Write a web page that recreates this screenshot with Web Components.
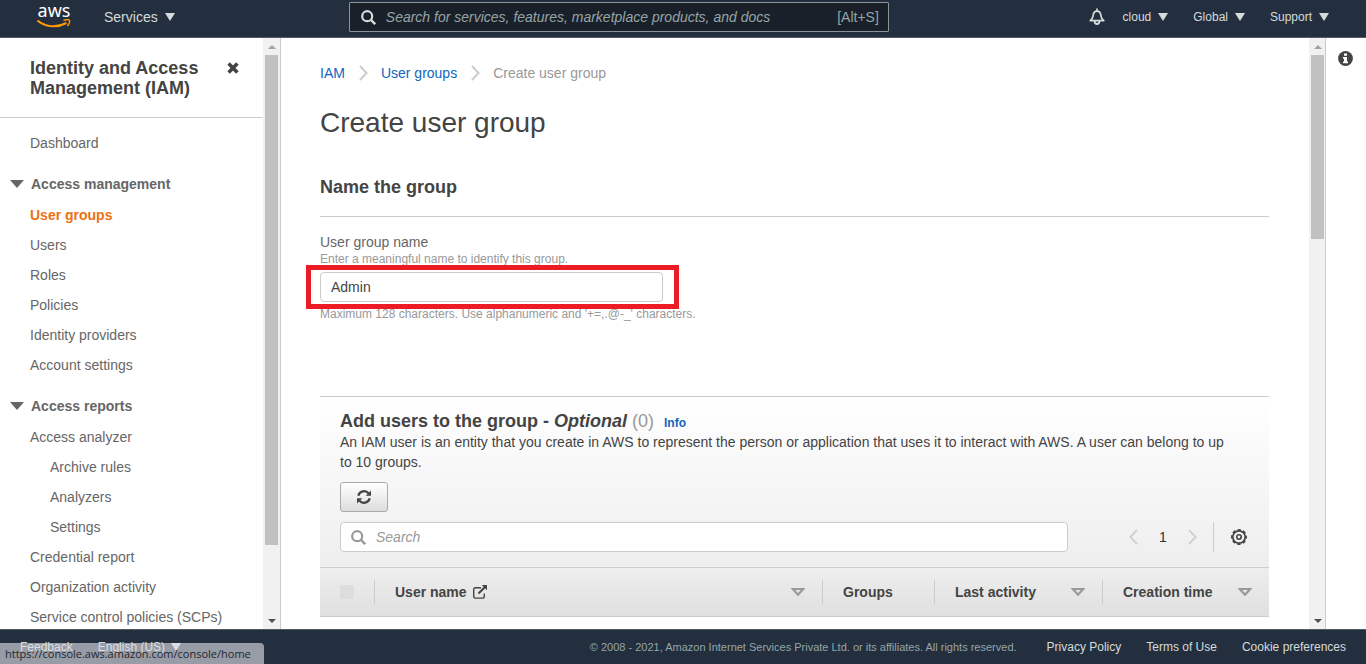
<!DOCTYPE html>
<html lang="en">
<head>
<meta charset="utf-8">
<title>Create user group - IAM</title>
<style>
  html, body { height: 100%; margin: 0; }
  body { font: 14px/20px "Liberation Sans", Arial, sans-serif; color: #444; background: #fff; overflow: hidden; }
</style>
</head>
<body>
<iam-console></iam-console>
<script>
const base = `<style>
  *, *::before, *::after { box-sizing: border-box; }
  :host { display: block; }
  :host([hidden]) { display: none; }
  h1, h2, p, ul, ol { margin: 0; padding: 0; list-style: none; }
  button, input { font: inherit; color: inherit; margin: 0; }
  button { background: none; border: 0; padding: 0; cursor: pointer; }
  a { text-decoration: none; color: inherit; }
  svg { display: block; }
</style>`;

function define(name, html) {
  const template = document.createElement('template');
  template.innerHTML = base + html;
  customElements.define(name, class extends HTMLElement {
    constructor() {
      super();
      this.attachShadow({ mode: 'open' }).append(template.content.cloneNode(true));
    }
  });
}

/* Icons, chosen with the name attribute */
const icons = {
  caret: [10, 8, '<path d="M0 0h10L5 8z" fill="currentColor"/>'],
  fold: [14, 8, '<path d="M0 0h14L7 8z" fill="currentColor"/>'],
  sort: [14, 8, '<path d="M1.800 1h10.400L7 6.700z" fill="none" stroke="#999" stroke-width="2.200"/>'],
  search: [15, 15, '<circle cx="6.200" cy="6.200" r="5" fill="none" stroke="currentColor" stroke-width="2.200"/><path d="M9.900 9.900l4.300 4.300" stroke="currentColor" stroke-width="2.400"/>'],
  bell: [16, 18, '<path d="M8 1.2v1.6M1.200 12.600h13.600c-2.200-1.500-2.700-2.800-2.900-4.900C11.600 4.800 10.400 3.200 8 3.200S4.400 4.800 4.100 7.700c-.2 2.100-.7 3.400-2.900 4.900z" fill="none" stroke="currentColor" stroke-width="1.700" stroke-linejoin="round" stroke-linecap="round"/><path d="M5.600 13a2.400 3 0 0 0 4.800 0" fill="none" stroke="currentColor" stroke-width="1.800"/>'],
  close: [12, 12, '<path d="M1.600 1.600l8.800 8.800M10.400 1.600l-8.800 8.800" stroke="currentColor" stroke-width="3.600"/>'],
  chevron: [9, 16, '<path d="M1 1l6.500 7L1 15" fill="none" stroke="currentColor" stroke-width="2"/>'],
  back: [9, 16, '<path d="M8 1L1.500 8 8 15" fill="none" stroke="currentColor" stroke-width="1.800"/>'],
  next: [9, 16, '<path d="M1 1l6.500 7L1 15" fill="none" stroke="currentColor" stroke-width="1.800"/>'],
  refresh: [14, 14, '<path d="M1.300 5.800A5.900 5.900 0 0 1 11.600 3.400M12.700 8.200A5.900 5.900 0 0 1 2.400 10.600" fill="none" stroke="currentColor" stroke-width="2.200"/><path d="M14 .5v5.300H8.700zM0 13.500V8.200h5.300z" fill="currentColor"/>'],
  external: [14, 14, '<path d="M8 2.700H2.200A1.500 1.500 0 0 0 .7 4.200v7.400a1.500 1.500 0 0 0 1.500 1.500h7.600a1.500 1.500 0 0 0 1.500-1.500V8.500" fill="none" stroke="currentColor" stroke-width="1.400"/><path d="M5.500 8.500L12 2" stroke="currentColor" stroke-width="2.100"/><path d="M8.800 0H14v5.200z" fill="currentColor"/>'],
  gear: [16, 16, '<g fill="none" stroke="currentColor"><circle cx="8" cy="8" r="6.200" stroke-width="1.700"/><circle cx="8" cy="8" r="7.300" stroke-width="1.400" stroke-dasharray="3.400 2.333" stroke-dashoffset="1.700"/><circle cx="8" cy="8" r="2.200" stroke-width="1.600"/></g>'],
  info: [15, 15, '<circle cx="7.500" cy="7.500" r="7.400" fill="currentColor"/><path d="M6 2.500h3v2.200H6zM5 6h4v4.500h1v1.800H5v-1.800h1V7.700H5z" fill="#fff"/>'],
  up: [8, 4, '<path d="M0 4L4 0l4 4z" fill="currentColor"/>'],
  down: [8, 4, '<path d="M0 0l4 4 4-4z" fill="currentColor"/>']
};
customElements.define('ui-icon', class extends HTMLElement {
  connectedCallback() {
    if (this.shadowRoot) return;
    const [w, h, body] = icons[this.getAttribute('name')];
    this.attachShadow({ mode: 'open' }).innerHTML = base +
      `<style>:host { display: inline-block; flex: none; }</style>
       <svg width="${w}" height="${h}" viewBox="0 0 ${w} ${h}" aria-hidden="true">${body}</svg>`;
  }
});

define('aws-logo', `<style>
    :host { width: 34px; color: #fff; }
    b { display: block; font: 400 18px/8px "Noto Sans", sans-serif; text-align: center; height: 12px; }
    svg { margin-top: 1px; }
  </style>
  <b>aws</b>
  <svg width="34" height="9" viewBox="0 0 34 9" fill="none" stroke="#f90" aria-hidden="true">
    <path d="M.5 1.500C9 8.500 20 9 29.500 4" stroke-width="2"/>
    <path d="M26.500 1.500c3-1 5.500-1 6 0s-.5 3.500-2 5.500" stroke-width="1.500"/>
  </svg>`);

define('menu-button', `<style>
    button { display: flex; align-items: center; gap: var(--gap, 6px); white-space: nowrap; }
  </style>
  <button type="button"><slot></slot><ui-icon name="caret"></ui-icon></button>`);

define('top-bar', `<style>
    :host { flex: none; background: #232f3e; border-bottom: 1px solid #545b64; color: #d5dbdb; }
    header { display: grid; grid-template-columns: 17fr 540px 24fr; height: 37px; padding: 2px 37px 5px 37px; }
    .left, .right { display: flex; align-items: center; }
    .left { gap: 33px; }
    .right { justify-content: flex-end; font-size: 12px; gap: 25px; }
    .bell { display: flex; margin-right: -7px; }
    menu-button { --gap: 7px; }
    .search { display: flex; align-items: center; gap: 10px; padding: 0 9px 0 11px; background: #1a2029; border: 1px solid #879596; border-radius: 1px; color: #95a5a6; }
    .search ui-icon { color: #d5dbdb; }
    input { flex: 1; min-width: 0; border: 0; padding: 0; background: none; outline: 0; }
    input::placeholder { color: inherit; font-style: italic; opacity: 1; }
  </style>
  <header>
    <div class="left"><a href="#home" aria-label="AWS home"><aws-logo></aws-logo></a><menu-button>Services</menu-button></div>
    <div class="search"><ui-icon name="search"></ui-icon>
      <input type="text" aria-label="Search services" placeholder="Search for services, features, marketplace products, and docs"><span>[Alt+S]</span></div>
    <div class="right"><button class="bell" type="button" aria-label="Notifications"><ui-icon name="bell"></ui-icon></button>
      <menu-button>cloud</menu-button><menu-button>Global</menu-button><menu-button>Support</menu-button></div>
  </header>`);

define('scroll-rail', `<style>
    :host { display: flex; flex-direction: column; flex: none; background: #f1f1f1; border-right: 1px solid #ccc; padding-left: 2px; padding-right: var(--inset, 2px); }
    span { width: 13px; height: 17px; flex: none; display: grid; place-items: center; color: #505050; }
    .top { color: #a3a3a3; }
    .track { flex: 1; }
    .thumb { height: var(--thumb); background: #c1c1c1; }
  </style>
  <span class="top"><ui-icon name="up"></ui-icon></span>
  <div class="track"><div class="thumb"></div></div>
  <span><ui-icon name="down"></ui-icon></span>`);

define('nav-link', `<style>
    a { display: block; padding: 5px 0 5px 30px; color: #666; white-space: nowrap; }
    :host([nested]) a { padding-left: 50px; }
    :host([current]) a { color: #ec7211; font-weight: bold; }
  </style><a href="#"><slot></slot></a>`);

define('nav-section', `<style>
    :host { margin-top: 10px; }
    button { display: flex; align-items: center; gap: 7px; height: 32px; padding-left: 10px; font-weight: bold; color: #666; }
  </style>
  <button type="button" aria-expanded="true"><ui-icon name="fold"></ui-icon><slot name="title"></slot></button>
  <slot></slot>`);

define('side-nav', `<style>
    :host { flex: none; width: 263px; overflow: hidden; }
    .head { display: flex; align-items: flex-start; justify-content: space-between; padding: 20px 24px 19px 30px; border-bottom: 1px solid #ccc; }
    h2 { font-size: 18px; line-height: 20px; width: 180px; }
    .head button { display: flex; padding: 4px 0; }
    nav { padding-top: 10px; }
  </style>
  <div class="head"><h2>Identity and Access Management (IAM)</h2><button type="button" aria-label="Close navigation"><ui-icon name="close"></ui-icon></button></div>
  <nav>
    <nav-link>Dashboard</nav-link>
    <nav-section><span slot="title">Access management</span>
      <nav-link current>User groups</nav-link><nav-link>Users</nav-link><nav-link>Roles</nav-link><nav-link>Policies</nav-link>
      <nav-link>Identity providers</nav-link><nav-link>Account settings</nav-link></nav-section>
    <nav-section><span slot="title">Access reports</span>
      <nav-link>Access analyzer</nav-link><nav-link nested>Archive rules</nav-link><nav-link nested>Analyzers</nav-link><nav-link nested>Settings</nav-link>
      <nav-link>Credential report</nav-link><nav-link>Organization activity</nav-link><nav-link>Service control policies (SCPs)</nav-link></nav-section>
  </nav>`);

define('bread-crumbs', `<style>
    ol { display: flex; align-items: center; gap: 13px; color: #999; }
    li { display: flex; align-items: center; gap: 14px; }
    a { color: #1166bb; }
    ui-icon { color: #ccc; }
  </style>
  <nav aria-label="Breadcrumb"><ol>
    <li><a href="#iam">IAM</a><ui-icon name="chevron"></ui-icon></li>
    <li><a href="#groups">User groups</a><ui-icon name="chevron"></ui-icon></li>
    <li>Create user group</li>
  </ol></nav>`);

define('group-name-form', `<style>
    h2 { font-size: 18px; line-height: 20px; padding-bottom: 19px; border-bottom: 1px solid #ccc; margin-bottom: 15px; }
    label { display: block; color: #666; }
    p { font-size: 12px; line-height: 14px; color: #999; }
    .field { position: relative; width: 343px; margin: 6px 0 5px; }
    input { display: block; width: 100%; height: 30px; padding: 0 10px; border: 1px solid #ccc; border-radius: 4px; background: #fff; outline: 0; }
    .mark { position: absolute; inset: -7px -16px -7px -14px; border: 5px solid #ed1c24; pointer-events: none; }
  </style>
  <h2>Name the group</h2>
  <label for="name">User group name</label>
  <p id="hint">Enter a meaningful name to identify this group.</p>
  <div class="field"><input id="name" type="text" value="Admin" aria-describedby="hint limit"><div class="mark"></div></div>
  <p id="limit">Maximum 128 characters. Use alphanumeric and '+=,.@-_' characters.</p>`);

define('page-picker', `<style>
    :host { display: flex; align-items: center; height: 30px; }
    button { display: flex; color: #ccc; }
    b { width: 50px; text-align: center; font-size: 14px; font-weight: normal; color: #333; }
    .settings { margin-left: 16px; height: 30px; align-items: center; border-left: 1px solid #ccc; padding: 0 2px 0 17px; color: #444; }
  </style>
  <button type="button" aria-label="Previous page"><ui-icon name="back"></ui-icon></button><b>1</b>
  <button type="button" aria-label="Next page"><ui-icon name="next"></ui-icon></button>
  <button class="settings" type="button" aria-label="Preferences"><ui-icon name="gear"></ui-icon></button>`);

define('users-panel', `<style>
    :host { border-top: 1px solid #ccc; }
    .top { padding: 14px 20px 15px; background: linear-gradient(#fff, #eee); }
    h2 { font-size: 18px; line-height: 20px; display: flex; align-items: baseline; }
    h2 span { white-space: pre; }
    .count { font-weight: normal; color: #999; padding-left: 5px; }
    h2 a { font-size: 12px; line-height: 16px; color: #1166bb; padding-left: 10px; }
    p { padding: 1px 20px 0 0; }
    .refresh { display: grid; place-items: center; width: 48px; height: 30px; margin: 10px 0; border: 1px solid #aaa; border-radius: 3px; background: linear-gradient(#fff, #ddd); }
    .tools { display: flex; justify-content: space-between; }
    .search { display: flex; align-items: center; gap: 10px; flex: 0 1 728px; height: 30px; padding: 0 10px; background: #fff; border: 1px solid #ccc; border-radius: 4px; color: #999; }
    input[type=search] { flex: 1; min-width: 0; border: 0; padding: 0; background: none; outline: 0; }
    input::placeholder { color: inherit; font-style: italic; opacity: 1; }
    table { width: 100%; table-layout: fixed; border-collapse: separate; border-spacing: 0; border: solid #ccc; border-width: 1px 0; background: linear-gradient(#eee, #e0e0e0); }
    th { padding: 12px 0; text-align: left; }
    th div { display: flex; align-items: center; justify-content: space-between; height: 24px; padding: 0 17px 0 20px; border-right: 1px solid #ccc; white-space: nowrap; }
    th:last-child div { border: 0; }
    th span { display: flex; align-items: center; gap: 6px; }
    th input { appearance: none; display: block; width: 14px; height: 14px; border-radius: 2px; background: #ddd; }
    .check { width: 55px; } .groups { width: 112px; } .last { width: 168px; } .made { width: 166px; }
  </style>
  <div class="top">
    <h2><span>Add users to the group - <i>Optional</i></span><span class="count">(0)</span><a href="#info">Info</a></h2>
    <p>An IAM user is an entity that you create in AWS to represent the person or application that uses it to interact with AWS. A user can belong to up to 10 groups.</p>
    <button class="refresh" type="button" aria-label="Refresh"><ui-icon name="refresh"></ui-icon></button>
    <div class="tools">
      <div class="search"><ui-icon name="search"></ui-icon><input type="search" aria-label="Search users" placeholder="Search"></div>
      <page-picker></page-picker>
    </div>
  </div>
  <table><thead><tr>
    <th class="check"><div><input type="checkbox" disabled aria-label="Select all users"></div></th>
    <th><div><span>User name <ui-icon name="external"></ui-icon></span><ui-icon name="sort"></ui-icon></div></th>
    <th class="groups"><div>Groups</div></th>
    <th class="last"><div>Last activity<ui-icon name="sort"></ui-icon></div></th>
    <th class="made"><div>Creation time<ui-icon name="sort"></ui-icon></div></th>
  </tr></thead></table>`);

define('page-footer', `<style>
    :host { position: relative; flex: none; background: #232f3e; border-top: 1px solid #545b64; color: #d5dbdb; font-size: 12px; }
    footer { display: flex; justify-content: space-between; height: 34px; line-height: 34px; padding: 0 20px; white-space: nowrap; }
    div { display: flex; gap: 25px; }
    small { font-size: 11px; color: #95a5a6; margin-right: 5px; }
    output { position: absolute; left: 0; bottom: 0; min-width: 264px; height: 21px; padding: 0 6px 0 5px; font: 11px/21px "Open Sans", sans-serif; color: #23272f; background: rgba(222, 225, 230, .62); border-radius: 0 4px 0 0; }
  </style>
  <footer>
    <div><a href="#feedback">Feedback</a><menu-button>English (US)</menu-button></div>
    <div><small>© 2008 - 2021, Amazon Internet Services Private Ltd. or its affiliates. All rights reserved.</small>
      <a href="#privacy">Privacy Policy</a><a href="#terms">Terms of Use</a><a href="#cookies">Cookie preferences</a></div>
  </footer>
  <output>https://console.aws.amazon.com/console/home</output>`);

define('iam-console', `<style>
    :host { display: flex; flex-direction: column; height: 100vh; }
    .body { flex: 1; min-height: 0; display: flex; }
    main { flex: 1; min-width: 0; overflow: hidden; padding: 25px 40px 0 39px; }
    h1 { font-size: 28px; line-height: 36px; font-weight: normal; margin: 22px 0 36px; }
    users-panel { margin-top: 75px; }
    .side { --thumb: 88%; }
    .main { --thumb: 33%; --inset: 1px; }
    aside { flex: none; padding: 13px 13px 0 12px; }
    aside button { display: block; padding: 0; border: 0; background: none; color: #444; }
  </style>
  <top-bar></top-bar>
  <div class="body">
    <side-nav></side-nav><scroll-rail class="side"></scroll-rail>
    <main><bread-crumbs></bread-crumbs><h1>Create user group</h1><group-name-form></group-name-form><users-panel></users-panel></main>
    <scroll-rail class="main"></scroll-rail>
    <aside><button type="button" aria-label="Help panel"><ui-icon name="info"></ui-icon></button></aside>
  </div>
  <page-footer></page-footer>`);
</script>
</body>
</html>
